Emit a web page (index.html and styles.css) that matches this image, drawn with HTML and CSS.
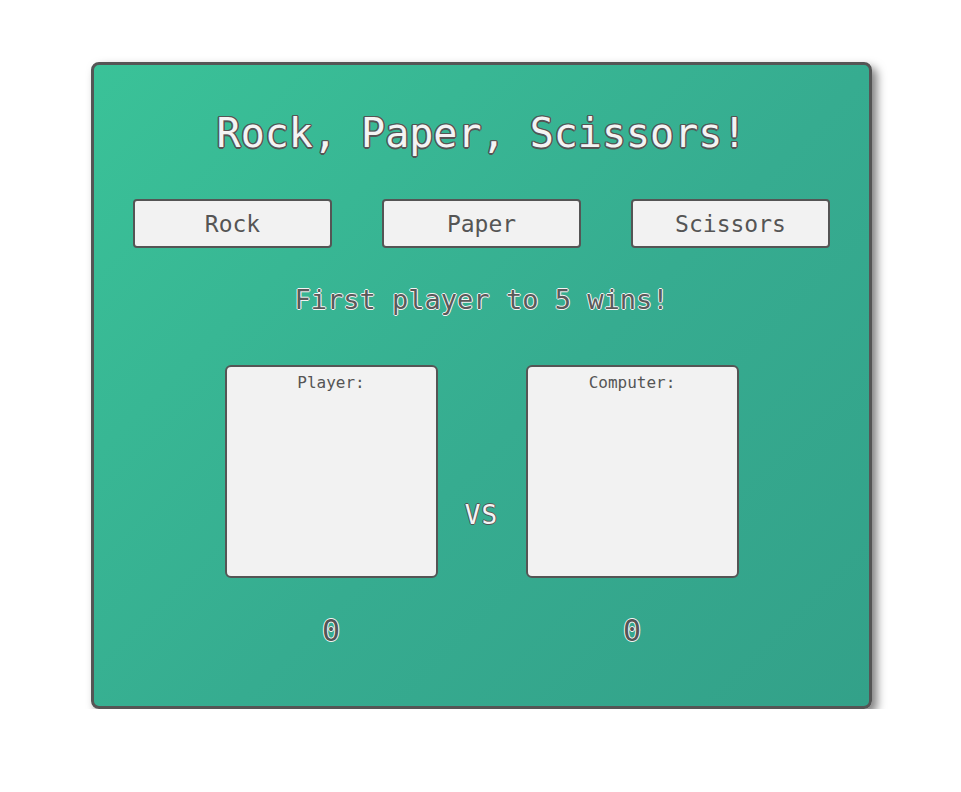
FILE: index.html
```html
<!DOCTYPE html>
<html>
<head>
<meta charset="utf-8">
<link rel="stylesheet" href="styles.css">
</head>
<body>
<div class="card">
  <h1 class="title">Rock, Paper, Scissors!</h1>
  <div class="choices">
    <button class="choice">Rock</button>
    <button class="choice">Paper</button>
    <button class="choice">Scissors</button>
  </div>
  <p class="message">First player to 5 wins!</p>
  <div class="arena">
    <div class="panel"><span class="label">Player:</span></div>
    <span class="vs">VS</span>
    <div class="panel"><span class="label">Computer:</span></div>
  </div>
  <div class="scores">
    <span class="score">0</span>
    <span class="score">0</span>
  </div>
</div>
</body>
</html>
```
FILE: styles.css
```css
html, body {
  margin: 0;
  padding: 0;
  background: #ffffff;
}
body {
  font-family: "DejaVu Sans Mono", "Liberation Mono", monospace;
  padding-top: 62px;
}
.card {
  box-sizing: border-box;
  width: 781px;
  height: 647px;
  margin: 0 0 0 91px;
  border: 3px solid #555555;
  border-radius: 8px;
  background: linear-gradient(135deg, #3ac298 0%, #36ac90 55%, #33a189 100%);
  box-shadow: 5px 5px 10px rgba(0, 0, 0, 0.5);
  display: flex;
  flex-direction: column;
  align-items: center;
  padding: 44px 39px 0;
}
.title {
  margin: 0;
  font-size: 40px;
  line-height: 48px;
  font-weight: normal;
  color: #f4f4f4;
  text-shadow: -1.5px 0 0 #555, 1.5px 0 0 #555, 0 -1.5px 0 #555, 0 1.5px 0 #555,
    -1px -1px 0 #555, 1px 1px 0 #555, -1px 1px 0 #555, 1px -1px 0 #555;
}
.choices {
  margin-top: 42px;
  width: 100%;
  display: flex;
  justify-content: space-between;
}
.choice {
  box-sizing: border-box;
  width: 199px;
  height: 49px;
  border: 2px solid #555555;
  border-radius: 4px;
  background: #f2f2f2;
  color: #555555;
  font-family: "DejaVu Sans Mono", "Liberation Mono", monospace;
  font-size: 23px;
  padding: 0;
}
.message {
  margin: 36px 0 0;
  font-size: 27px;
  line-height: 32px;
  color: #5a5a5a;
  text-shadow: -1px 0 0 #f4f4f4, 1px 0 0 #f4f4f4, 0 -1px 0 #f4f4f4, 0 1px 0 #f4f4f4;
}
.arena {
  margin-top: 49px;
  display: flex;
  gap: 0;
}
.panel {
  box-sizing: border-box;
  width: 213px;
  height: 213px;
  border: 2px solid #555555;
  border-radius: 6px;
  background: #f2f2f2;
  display: flex;
  justify-content: center;
  padding-top: 6px;
}
.label {
  font-size: 16px;
  line-height: 20px;
  color: #555555;
}
.vs {
  width: 88px;
  text-align: center;
  align-self: flex-end;
  margin-bottom: 48px;
  font-size: 26px;
  line-height: 30px;
  letter-spacing: 1px;
  color: #f4f4f4;
  text-shadow: -1px 0 0 #555, 1px 0 0 #555, 0 -1px 0 #555, 0 1px 0 #555;
}
.scores {
  margin-top: 35px;
  display: flex;
  gap: 88px;
}
.score {
  width: 213px;
  text-align: center;
  font-size: 30px;
  line-height: 36px;
  color: #555555;
  text-shadow: -1px 0 0 #f4f4f4, 1px 0 0 #f4f4f4, 0 -1px 0 #f4f4f4, 0 1px 0 #f4f4f4;
}
```
